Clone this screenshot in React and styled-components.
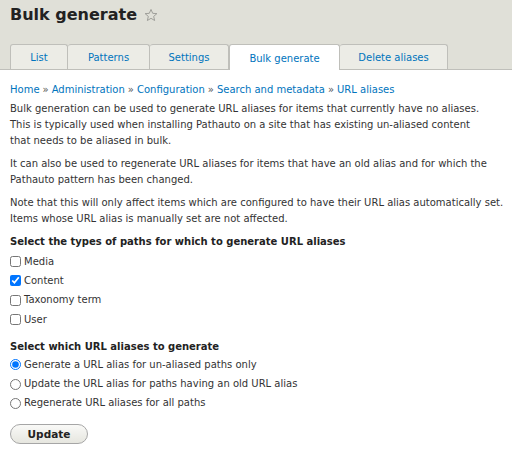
import React from "react";
import styled, { createGlobalStyle } from "styled-components";

const GlobalStyle = createGlobalStyle`
  body {
    margin: 0;
    background: #fff;
    font-family: "DejaVu Sans", Verdana, sans-serif;
    color: #333;
  }
`;

const Header = styled.div`
  background: #e0e0d8;
  border-bottom: 1px solid #bfbfba;
  padding: 3px 10px 0;
`;

const Title = styled.h1`
  margin: 0;
  display: flex;
  align-items: center;
  gap: 7px;
  font-size: 16px;
  line-height: 24px;
  font-weight: bold;
  color: #222;
`;

const Star = styled.svg`
  width: 14px;
  height: 14px;
  margin-top: -1px;
`;

const TabBar = styled.ul`
  list-style: none;
  margin: 17px 0 -1px;
  padding: 0;
  display: flex;
  align-items: flex-end;
`;

const Tab = styled.li`
  height: ${({ $active }) => ($active ? "26px" : "25px")};
  width: ${({ $w }) => $w}px;
  box-sizing: border-box;
  display: flex;
  align-items: center;
  justify-content: center;
  padding-top: 1px;
  background: ${({ $active }) => ($active ? "#fff" : "#ecece6")};
  border: 1px solid #bfbfba;
  border-bottom: none;
  border-left: ${({ $first, $active }) => ($first || $active ? "1px solid #bfbfba" : "none")};
  border-radius: 3px 3px 0 0;
  margin-bottom: ${({ $active }) => ($active ? "0" : "1px")};
  font-size: 10px;
  color: #0074bd;
`;

const Content = styled.div`
  padding: 12px 10px 0;
  font-size: 10px;
  line-height: 16px;
`;

const Breadcrumb = styled.div`
  margin-bottom: 3px;
  color: #0074bd;
`;

const Sep = styled.span`
  color: #555;
  margin: 0 3px;
`;

const Para = styled.p`
  margin: 0 0 7px;
  white-space: nowrap;
`;

const Fieldset = styled.div`
  margin-top: ${({ $top }) => $top}px;
`;

const Legend = styled.div`
  font-weight: bold;
  color: #222;
  height: 16px;
  margin-bottom: ${({ $gap }) => $gap || 0}px;
`;

const Option = styled.label`
  display: flex;
  align-items: center;
  gap: 3px;
  height: 19.3px;
`;

const Box = styled.input`
  width: 11px;
  height: 11px;
  margin: 0;
  accent-color: #0075ff;
`;

const Button = styled.button`
  display: block;
  margin-top: 11px;
  width: 78px;
  height: 20px;
  border: 1px solid #a6a6a6;
  border-radius: 10px;
  background: linear-gradient(#f9f9f7, #e6e6df);
  font-family: "DejaVu Sans", Verdana, sans-serif;
  font-size: 10.5px;
  font-weight: bold;
  color: #222;
  padding: 0;
`;

const tabs = [
  { label: "List", w: 58 },
  { label: "Patterns", w: 82 },
  { label: "Settings", w: 79 },
  { label: "Bulk generate", w: 111, active: true },
  { label: "Delete aliases", w: 108 },
];

const crumbs = ["Home", "Administration", "Configuration", "Search and metadata", "URL aliases"];

const types = ["Media", "Content", "Taxonomy term", "User"];

const modes = [
  "Generate a URL alias for un-aliased paths only",
  "Update the URL alias for paths having an old URL alias",
  "Regenerate URL aliases for all paths",
];

export default function App() {
  return (
    <>
      <GlobalStyle />
      <Header>
        <Title>
          Bulk generate
          <Star viewBox="0 0 24 24" fill="none" stroke="#8a8a85" strokeWidth="1.3" strokeLinejoin="miter">
            <path d="M12 2.5l2.9 6.6 7.1.6-5.4 4.7 1.6 7-6.2-3.7-6.2 3.7 1.6-7L2 9.7l7.1-.6z" />
          </Star>
        </Title>
        <TabBar>
          {tabs.map((t, i) => (
            <Tab key={t.label} $w={t.w} $active={t.active} $first={i === 0}>
              {t.label}
            </Tab>
          ))}
        </TabBar>
      </Header>
      <Content>
        <Breadcrumb>
          {crumbs.map((c, i) => (
            <React.Fragment key={c}>
              {i > 0 && <Sep>»</Sep>}
              {c}
            </React.Fragment>
          ))}
        </Breadcrumb>
        <Para>
          Bulk generation can be used to generate URL aliases for items that currently have no aliases.
          <br />
          This is typically used when installing Pathauto on a site that has existing un-aliased content
          <br />
          that needs to be aliased in bulk.
        </Para>
        <Para>
          It can also be used to regenerate URL aliases for items that have an old alias and for which the
          <br />
          Pathauto pattern has been changed.
        </Para>
        <Para>
          Note that this will only affect items which are configured to have their URL alias automatically set.
          <br />
          Items whose URL alias is manually set are not affected.
        </Para>
        <Fieldset $top={6}>
          <Legend $gap={2}>Select the types of paths for which to generate URL aliases</Legend>
          {types.map((l) => (
            <Option key={l}>
              <Box type="checkbox" defaultChecked={l === "Content"} />
              {l}
            </Option>
          ))}
        </Fieldset>
        <Fieldset $top={10}>
          <Legend>Select which URL aliases to generate</Legend>
          {modes.map((l, i) => (
            <Option key={l}>
              <Box type="radio" name="update" defaultChecked={i === 0} />
              {l}
            </Option>
          ))}
        </Fieldset>
        <Button>Update</Button>
      </Content>
    </>
  );
}
